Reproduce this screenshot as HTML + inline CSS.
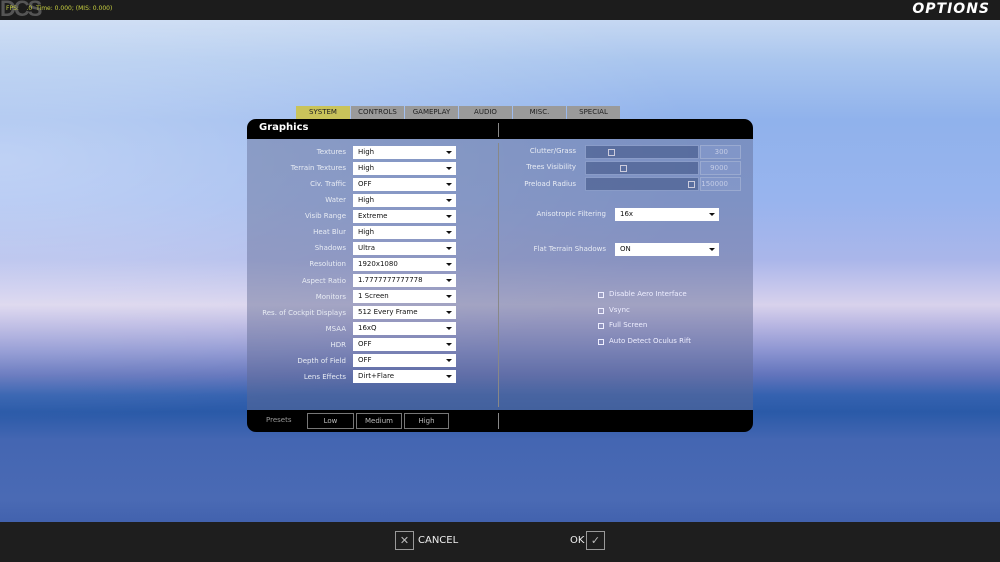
<!DOCTYPE html>
<html><head><style>
*{margin:0;padding:0;box-sizing:border-box}
body{width:1000px;height:562px;overflow:hidden;position:relative;font-family:"DejaVu Sans","Liberation Sans",sans-serif;
background:linear-gradient(180deg,#c6d8f2 20px,#aac6ee 60px,#90b2ec 120px,#98b4ee 200px,#aab6ea 260px,#c8c8ec 290px,#d8d2ec 305px,#b8b6e2 325px,#8e96d2 350px,#6274bc 375px,#3562b0 395px,#2a5aa8 412px,#4466b2 440px,#4a6ab4 500px,#4262ae 522px)}
.glow{position:absolute;left:0;top:20px;width:1000px;height:400px;background:radial-gradient(ellipse 700px 260px at 0px 140px,rgba(255,255,255,.4),rgba(255,255,255,0))}
.top{position:absolute;left:0;top:0;width:1000px;height:20px;background:#1c1c1c}
.top .fps{position:absolute;left:6px;top:5px;font-size:6px;color:#c8d040}
.top .logo{position:absolute;left:0;top:-4px;font-size:22px;font-weight:bold;color:#555;font-family:"Liberation Sans",sans-serif;letter-spacing:-2px}
.top .t{position:absolute;right:10px;top:1px;color:#fff;font-weight:bold;font-style:italic;font-size:14px;letter-spacing:1px}
.bot{position:absolute;left:0;top:522px;width:1000px;height:40px;background:#1e1e1e}
.btn{position:absolute;top:9px;width:19px;height:19px;border:1px solid #999;color:#bbb;font-size:11px;text-align:center;line-height:17px}
.bl{position:absolute;top:13px;color:#eee;font-size:10px}
.tab{position:absolute;top:106px;height:13px;width:53px;background:#9a9a9a;color:#222;font-size:7px;text-align:center;line-height:13px}
.panel{position:absolute;left:247px;top:119px;width:506px;height:313px;border-radius:9px;overflow:hidden;background:rgba(95,105,145,.45)}
.hd{position:absolute;left:0;top:0;width:506px;height:20px;background:#000}
.hd span{position:absolute;left:12px;top:3px;color:#fff;font-weight:bold;font-size:10px}
.ft{position:absolute;left:0;top:291px;width:506px;height:22px;background:#000}
.vl{position:absolute;left:251px;width:1px;background:#888}
.lab{position:absolute;color:#e8ecf4;font-size:7px;text-align:right}
.dd{position:absolute;height:13px;background:#fff;color:#111;font-size:7px;line-height:13px;padding-left:5px}
.dd:after{content:"";position:absolute;right:4px;top:5px;border:3px solid transparent;border-top:3px solid #111;border-bottom:0}
.sl{position:absolute;height:14px;background:rgba(60,80,130,.55);border:1px solid #8a9cc8}
.kn{position:absolute;top:3px;width:7px;height:7px;border:1px solid #ccd;}
.vb{position:absolute;height:14px;border:1px solid #9aaad0;background:rgba(140,160,210,.35);color:#c4cce6;font-size:7px;text-align:right;padding-right:12px;line-height:12px}
.pb{position:absolute;top:3px;height:16px;border:1px solid #777;color:#bbb;font-size:7px;text-align:center;line-height:14px}
.cb{position:absolute;color:#eef;font-size:7px}
.cb i{position:absolute;left:-11px;top:2px;width:6px;height:6px;border:1px solid #eef}
</style></head><body>
<div class="glow"></div>
<div class="top"><div class="logo">DCS</div><div class="fps">FPS: &nbsp; &nbsp;.0&nbsp; Time: 0.000; (MIS: 0.000)</div><div class="t">OPTIONS</div></div>
<div class="tab" style="left:296px;width:54px;background:#c9c35a">SYSTEM</div>
<div class="tab" style="left:351px">CONTROLS</div>
<div class="tab" style="left:405px">GAMEPLAY</div>
<div class="tab" style="left:459px">AUDIO</div>
<div class="tab" style="left:513px">MISC.</div>
<div class="tab" style="left:567px">SPECIAL</div>
<div class="panel">
<div class="hd"><span>Graphics</span><div class="vl" style="top:4px;height:14px"></div></div>
<div class="vl" style="top:24px;height:264px"></div>
<div class="ft"><div style="position:absolute;left:19px;top:6px;color:#999;font-size:7px">Presets</div>
<div class="pb" style="left:60px;width:47px">Low</div><div class="pb" style="left:109px;width:46px">Medium</div><div class="pb" style="left:157px;width:45px">High</div>
<div class="vl" style="top:3px;height:16px"></div></div>
</div>
<div id="rows"></div>
<script>
var L=[["Textures","High"],["Terrain Textures","High"],["Civ. Traffic","OFF"],["Water","High"],["Visib Range","Extreme"],["Heat Blur","High"],["Shadows","Ultra"],["Resolution","1920x1080"],["Aspect Ratio","1.7777777777778"],["Monitors","1 Screen"],["Res. of Cockpit Displays","512 Every Frame"],["MSAA","16xQ"],["HDR","OFF"],["Depth of Field","OFF"],["Lens Effects","Dirt+Flare"]];
var h="";
L.forEach(function(r,i){var y=145.5+i*16.07;
h+='<div class="lab" style="left:200px;width:146px;top:'+(y+2.5)+'px">'+r[0]+'</div><div class="dd" style="left:353px;width:103px;top:'+y+'px">'+r[1]+'</div>';});
var S=[["Clutter/Grass",300,22],["Trees Visibility",9000,34],["Preload Radius",150000,102]];
S.forEach(function(r,i){var y=144.5+i*16.3;
h+='<div class="lab" style="left:440px;width:136px;top:'+(y+2.5)+'px">'+r[0]+'</div><div class="sl" style="left:585px;width:114px;top:'+y+'px"><div class="kn" style="left:'+r[2]+'px"></div></div><div class="vb" style="left:700px;width:41px;top:'+y+'px">'+r[1]+'</div>';});
h+='<div class="lab" style="left:480px;width:126px;top:210px">Anisotropic Filtering</div><div class="dd" style="left:615px;width:104px;top:207.5px">16x</div>';
h+='<div class="lab" style="left:480px;width:126px;top:244.5px">Flat Terrain Shadows</div><div class="dd" style="left:615px;width:104px;top:242.5px">ON</div>';
["Disable Aero Interface","Vsync","Full Screen","Auto Detect Oculus Rift"].forEach(function(t,i){
h+='<div class="cb" style="left:609px;top:'+(290+i*15.6)+'px"><i></i>'+t+'</div>';});
document.getElementById("rows").innerHTML=h;
</script>
<div class="bot">
<div class="btn" style="left:395px">✕</div><div class="bl" style="left:418px">CANCEL</div>
<div class="bl" style="left:570px">OK</div><div class="btn" style="left:586px">✓</div>
</div>
</body></html>
